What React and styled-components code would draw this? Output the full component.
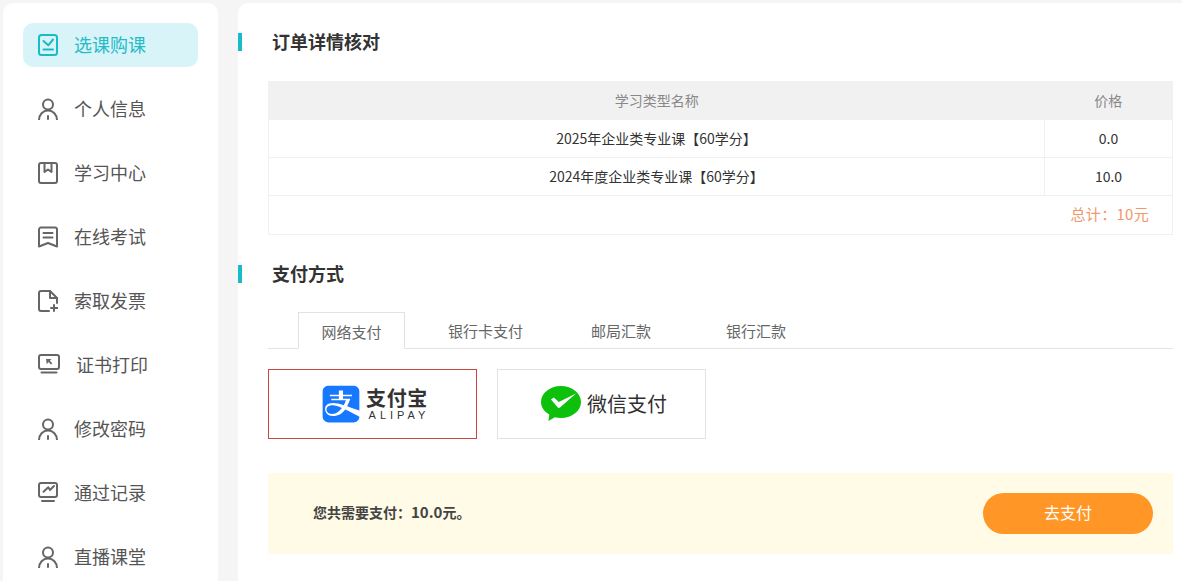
import React from "react";
import styled, { createGlobalStyle } from "styled-components";
import { FaAlipay } from "react-icons/fa";

const Global = createGlobalStyle`
  html, body { margin: 0; padding: 0; height: 100%; overflow: hidden; background: #f5f5f5; }
  body { font-family: "Noto Sans CJK SC", "Noto Sans", sans-serif; }
  * { box-sizing: border-box; }
`;

const Page = styled.div`
  display: flex;
  gap: 20px;
  height: 581px;
  padding: 3px 0 0 3px;
  overflow: hidden;
`;

const Sidebar = styled.nav`
  flex: 0 0 215px;
  height: 700px;
  background: #fff;
  border-radius: 10px 10px 0 0;
  padding: 20px;
  display: flex;
  flex-direction: column;
  gap: 20px;
`;

const MenuItem = styled.a`
  display: flex;
  align-items: center;
  gap: 16px;
  height: 44px;
  flex: none;
  padding-left: 15px;
  border-radius: 10px;
  font-size: 18px;
  color: ${(p) => (p.$active ? "#25bcc6" : "#555")};
  background: ${(p) => (p.$active ? "#d9f4f9" : "transparent")};
`;

const MenuText = styled.span`
  padding-bottom: 2px;
`;

const IconSvg = styled.svg`
  flex: none;
  fill: none;
  stroke: currentColor;
  stroke-width: 2;
  stroke-linecap: round;
  stroke-linejoin: round;
  color: ${(p) => (p.$active ? "#17bcc8" : "#666")};
`;

const Icon = ({ w = 20, h = 22, active, children }) => (
  <IconSvg width={w} height={h} viewBox={`0 0 ${w} ${h}`} $active={active}>{children}</IconSvg>
);

const icons = {
  select: (a) => (
    <Icon active={a}>
      <rect x="1" y="1" width="18" height="20" rx="2.5" />
      <path d="M5.500 7l4.800 4.300L15 5.500M5.500 15.500h9.500" />
    </Icon>
  ),
  person: () => (
    <Icon>
      <circle cx="10" cy="6.500" r="5" />
      <path d="M1 22c0-5.500 4-9.500 9-9.500s9 4 9 9.500M10 18v3" />
    </Icon>
  ),
  book: () => (
    <Icon>
      <rect x="1" y="1" width="18" height="20" rx="2" />
      <path d="M6.500 1v9l3.500-2.500L13.500 10V1" />
    </Icon>
  ),
  exam: () => (
    <Icon>
      <path d="M3 1.500h14a2 2 0 0 1 2 2v17l-9-3.500-9 3.500v-17a2 2 0 0 1 2-2z" />
      <path d="M5.500 7h9M5.500 11.500h9" />
    </Icon>
  ),
  invoice: () => (
    <Icon>
      <path d="M11 21H3a2 2 0 0 1-2-2V3a2 2 0 0 1 2-2h9l7 7v5" />
      <path d="M12 1v7h7M16 15v6M13 18h6.500" />
    </Icon>
  ),
  print: () => (
    <Icon w={22} h={22}>
      <rect x="1" y="1" width="20" height="14" rx="2" />
      <path d="M3.500 18.500h15" />
      <path fill="currentColor" stroke="none" d="M8 5h5.500l-1.700 1.700 2.500 2.500-1.300 1.300-2.500-2.500L8.800 10.200z" />
    </Icon>
  ),
  record: () => (
    <Icon>
      <rect x="1" y="1" width="18" height="14" rx="2" />
      <path d="M5.500 9.700l4.800-4.400 1.700 2.700 4-4M4 19h12" />
    </Icon>
  ),
};

const Main = styled.main`
  flex: 1;
  height: 700px;
  background: #fff;
  border-radius: 10px 0 0 0;
  padding-top: 30px;
`;

const SectionTitle = styled.h2`
  display: flex;
  align-items: center;
  gap: 30px;
  height: 18px;
  margin: 0;
  font-size: 18px;
  font-weight: 700;
  line-height: 18px;
  color: #333;
  &::before {
    content: "";
    width: 4px;
    height: 18px;
    background: #17bcc8;
  }
`;

const TitleText = styled.span`
  padding-bottom: 2px;
`;

const Body = styled.div`
  margin: ${(p) => (p.$flush ? 0 : "30px")} 9px 0 30px;
`;

const Spacer = styled.div`
  height: 30px;
`;

const Table = styled.table`
  width: 100%;
  border-collapse: collapse;
  table-layout: fixed;
  font-size: 14px;
  color: #333;
  border: 1px solid #f0f0f0;
`;

const Th = styled.th`
  height: 38px;
  padding: 0 0 2px;
  background: #f1f1f1;
  font-weight: 400;
  color: #888;
  width: ${(p) => p.$w || "auto"};
`;

const Td = styled.td`
  height: 38px;
  padding: 0 0 2px;
  text-align: center;
  border: 1px solid #f0f0f0;
`;

const TotalCell = styled.td`
  height: 39px;
  padding: 0 23px 3px 0;
  text-align: right;
  color: #f0986a;
  font-size: 15px;
  letter-spacing: 0.3px;
  border: 1px solid #f0f0f0;
`;

const Tabs = styled.div`
  display: flex;
  height: 37px;
  margin-top: 29px;
  padding-left: 30px;
  border-bottom: 1px solid #e2e2e2;
  font-size: 15px;
  color: #666;
`;

const Tab = styled.div`
  flex: none;
  width: ${(p) => p.$w}px;
  height: 37px;
  line-height: 37px;
  text-align: center;
  ${(p) => p.$active && "background:#fff;border:1px solid #e2e2e2;border-bottom-color:#fff;"}
`;

const Methods = styled.div`
  display: flex;
  gap: 20px;
  margin-top: 20px;
`;

const Method = styled.div`
  width: 209px;
  height: 70px;
  display: flex;
  align-items: center;
  justify-content: center;
  gap: ${(p) => (p.$active ? 4 : 6)}px;
  padding-left: ${(p) => (p.$active ? 3 : 5)}px;
  border: 1px solid ${(p) => (p.$active ? "#c9473f" : "#e2e2e2")};
  color: #2f2f2f;
`;

const AliBadge = styled(FaAlipay)`
  width: 42px;
  height: 42px;
  color: #1677ff;
  flex: none;
`;

const AliText = styled.div`
  display: flex;
  flex-direction: column;
  align-items: center;
`;

const AliName = styled.span`
  font-size: 20px;
  font-weight: 700;
  line-height: 22px;
  letter-spacing: 0.7px;
  color: #333;
`;

const AliEn = styled.span`
  font-family: "Liberation Sans", sans-serif;
  font-size: 11px;
  line-height: 13px;
  letter-spacing: 4px;
  margin-right: -4px;
  color: #333;
`;

const WeText = styled.span`
  font-size: 20px;
  padding-bottom: 2px;
`;

const Banner = styled.div`
  display: flex;
  align-items: center;
  justify-content: space-between;
  height: 81px;
  margin-top: 34px;
  padding: 0 20px 0 45px;
  background: #fffbe6;
`;

const Due = styled.div`
  font-size: 14px;
  font-weight: 700;
  color: #444;
  padding-bottom: 4px;
`;

const DueNum = styled.span`
  font-size: 15px;
`;

const PayButton = styled.button`
  width: 170px;
  height: 41px;
  border: 0;
  border-radius: 21px;
  padding: 0 0 3px;
  background: #ff9626;
  color: #fff;
  font: inherit;
  font-size: 16px;
`;

const menu = [
  ["select", "选课购课"],
  ["person", "个人信息"],
  ["book", "学习中心"],
  ["exam", "在线考试"],
  ["invoice", "索取发票"],
  ["print", "证书打印"],
  ["person", "修改密码"],
  ["record", "通过记录"],
  ["person", "直播课堂"],
];

const WeChatMark = () => (
  <svg width="40" height="36" viewBox="0 0 40 36">
    <path fill="#0cc00c" d="M20 0c11 0 20 7.200 20 16S31 32 20 32c-2.200 0-4.300-.3-6.200-.8L7.500 35l.8-6.500C3.200 25.700 0 21 0 16 0 7.200 9 0 20 0z" />
    <path fill="#fff" d="M10 13.500l2.800-2 5 4.500L35 7.500 19 21.500c-.9.700-1.800.6-2.400-.2z" />
  </svg>
);

export default function App() {
  return (
    <Page>
      <Global />
      <Sidebar>
        {menu.map(([k, t], i) => (
          <MenuItem key={t} $active={i === 0}>
            {icons[k](i === 0)}
            <MenuText>{t}</MenuText>
          </MenuItem>
        ))}
      </Sidebar>
      <Main>
        <SectionTitle><TitleText>订单详情核对</TitleText></SectionTitle>
        <Body>
          <Table>
            <thead>
              <tr>
                <Th>学习类型名称</Th>
                <Th $w="128px">价格</Th>
              </tr>
            </thead>
            <tbody>
              <tr>
                <Td>2025年企业类专业课【60学分】</Td>
                <Td>0.0</Td>
              </tr>
              <tr>
                <Td>2024年度企业类专业课【60学分】</Td>
                <Td>10.0</Td>
              </tr>
              <tr>
                <TotalCell colSpan={2}>总计：10元</TotalCell>
              </tr>
            </tbody>
          </Table>
        </Body>
        <Spacer />
        <SectionTitle><TitleText>支付方式</TitleText></SectionTitle>
        <Body $flush>
          <Tabs>
            <Tab $active $w={107}>网络支付</Tab>
            <Tab $w={161}>银行卡支付</Tab>
            <Tab $w={110}>邮局汇款</Tab>
            <Tab $w={160}>银行汇款</Tab>
          </Tabs>
          <Methods>
            <Method $active>
              <AliBadge />
              <AliText>
                <AliName>支付宝</AliName>
                <AliEn>ALIPAY</AliEn>
              </AliText>
            </Method>
            <Method>
              <WeChatMark />
              <WeText>微信支付</WeText>
            </Method>
          </Methods>
          <Banner>
            <Due>您共需要支付：<DueNum>10.0</DueNum>元。</Due>
            <PayButton>去支付</PayButton>
          </Banner>
        </Body>
      </Main>
    </Page>
  );
}
